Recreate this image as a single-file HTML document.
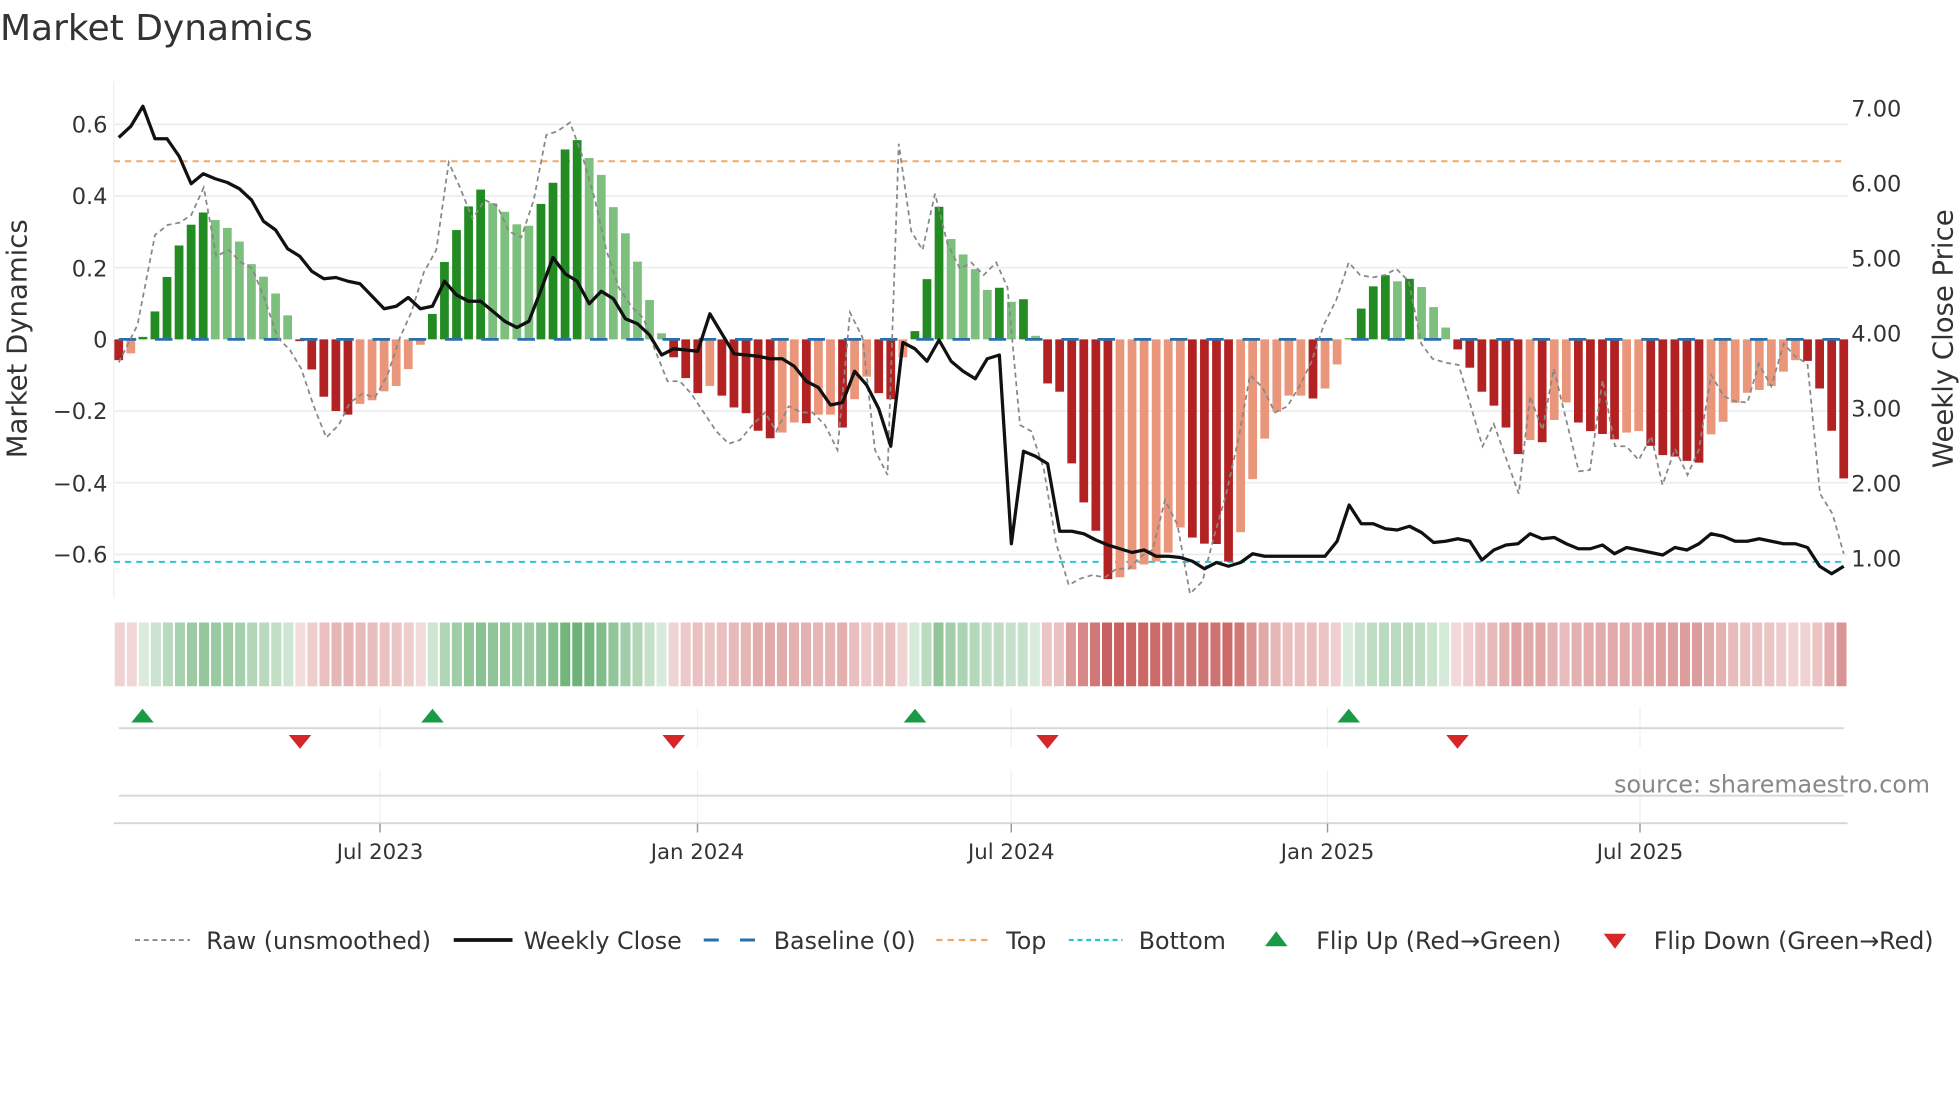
<!DOCTYPE html>
<html><head><meta charset="utf-8"><style>
html,body{margin:0;padding:0;background:#fff;}
svg{display:block;font-family:"DejaVu Sans","Liberation Sans",sans-serif;}
</style></head><body>
<svg id="s" width="1960" height="1102" viewBox="0 0 1568 881.6" xmlns="http://www.w3.org/2000/svg">
<text x="0" y="32" font-size="28.8" fill="#333">Market Dynamics</text>
<g id="grid" stroke="#e9ecf0" stroke-width="1.3"></g>
<line x1="91" y1="65" x2="91" y2="478" stroke="#eceff2" stroke-width="1"/>
<line x1="91" y1="129" x2="1475" y2="129" stroke="#f0a868" stroke-width="1.6" stroke-dasharray="5 4"/>
<line x1="91" y1="449.5" x2="1475" y2="449.5" stroke="#2ec4d6" stroke-width="1.6" stroke-dasharray="5 4"/>
<g id="bars"></g>
<line x1="95" y1="271.5" x2="1475" y2="271.5" stroke="#2a6fa8" stroke-width="2.2" stroke-dasharray="14 15"/>
<polyline id="raw" fill="none" stroke="#888" stroke-width="1.4" stroke-dasharray="4 3"/>
<polyline id="close" fill="none" stroke="#111" stroke-width="2.6" stroke-linejoin="round"/>
<g font-size="18" fill="#333" text-anchor="end">
<text x="86" y="106">0.6</text><text x="86" y="163">0.4</text><text x="86" y="221">0.2</text><text x="86" y="278">0</text>
<text x="86" y="335">−0.2</text><text x="86" y="393">−0.4</text><text x="86" y="450">−0.6</text>
</g>
<g font-size="18" fill="#333">
<text x="1481" y="93">7.00</text><text x="1481" y="153">6.00</text><text x="1481" y="213">5.00</text><text x="1481" y="273">4.00</text>
<text x="1481" y="333">3.00</text><text x="1481" y="393">2.00</text><text x="1481" y="453">1.00</text>
</g>
<text transform="translate(21,271) rotate(-90)" font-size="22" fill="#333" text-anchor="middle">Market Dynamics</text>
<text transform="translate(1562,271) rotate(-90)" font-size="22" fill="#333" text-anchor="middle">Weekly Close Price</text>
<g id="strip"></g>
<g stroke="#eef0f3" stroke-width="1">
<line x1="304" y1="566" x2="304" y2="598"/><line x1="558" y1="566" x2="558" y2="598"/><line x1="809" y1="566" x2="809" y2="598"/><line x1="1062" y1="566" x2="1062" y2="598"/><line x1="1312" y1="566" x2="1312" y2="598"/>
<line x1="304" y1="616" x2="304" y2="658"/><line x1="558" y1="616" x2="558" y2="658"/><line x1="809" y1="616" x2="809" y2="658"/><line x1="1062" y1="616" x2="1062" y2="658"/><line x1="1312" y1="616" x2="1312" y2="658"/>
</g>
<line x1="95" y1="582.5" x2="1475" y2="582.5" stroke="#d4d6d9" stroke-width="1.5"/>
<line x1="95" y1="636.5" x2="1475" y2="636.5" stroke="#d4d6d9" stroke-width="1.5"/>
<line x1="91" y1="658.5" x2="1478" y2="658.5" stroke="#d4d6d9" stroke-width="1.5"/>
<g stroke="#999" stroke-width="1.2">
<line x1="304" y1="659" x2="304" y2="666"/><line x1="558" y1="659" x2="558" y2="666"/><line x1="809" y1="659" x2="809" y2="666"/><line x1="1062" y1="659" x2="1062" y2="666"/><line x1="1312" y1="659" x2="1312" y2="666"/>
</g>
<g fill="#1a9a47">
<polygon points="105,578 123,578 114,567"/><polygon points="337,578 355,578 346,567"/><polygon points="723,578 741,578 732,567"/><polygon points="1070,578 1088,578 1079,567"/>
</g>
<g fill="#d62728">
<polygon points="231,588 249,588 240,599"/><polygon points="530,588 548,588 539,599"/><polygon points="829,588 847,588 838,599"/><polygon points="1157,588 1175,588 1166,599"/>
</g>
<text x="1544" y="634" font-size="19" fill="#888" text-anchor="end">source: sharemaestro.com</text>
<g font-size="17" fill="#333" text-anchor="middle">
<text x="304" y="687">Jul 2023</text><text x="558" y="687">Jan 2024</text><text x="809" y="687">Jul 2024</text><text x="1062" y="687">Jan 2025</text><text x="1312" y="687">Jul 2025</text>
</g>
<g font-size="19" fill="#333">
<line x1="108" y1="752" x2="152" y2="752" stroke="#888" stroke-width="1.5" stroke-dasharray="4 3"/>
<text x="165" y="759">Raw (unsmoothed)</text>
<line x1="363" y1="752" x2="410" y2="752" stroke="#111" stroke-width="3"/>
<text x="419" y="759">Weekly Close</text>
<line x1="563" y1="752" x2="605" y2="752" stroke="#2a6fa8" stroke-width="2.4" stroke-dasharray="12 17"/>
<text x="619" y="759">Baseline (0)</text>
<line x1="749" y1="752" x2="793" y2="752" stroke="#f0a868" stroke-width="1.8" stroke-dasharray="5 4"/>
<text x="805" y="759">Top</text>
<line x1="855" y1="752" x2="898" y2="752" stroke="#2ec4d6" stroke-width="1.8" stroke-dasharray="4 3"/>
<text x="911" y="759">Bottom</text>
<polygon points="1012,757 1030,757 1021,745" fill="#1a9a47"/>
<text x="1053" y="759">Flip Up (Red→Green)</text>
<polygon points="1283,747 1301,747 1292,759" fill="#d62728"/>
<text x="1323" y="759">Flip Down (Green→Red)</text>
</g>
</svg>
<script>
var NS="http://www.w3.org/2000/svg";
function el(t,a,p){var e=document.createElementNS(NS,t);for(var k in a)e.setAttribute(k,a[k]);p.appendChild(e);return e;}
var V=[-0.058,-0.039,0.007,0.078,0.174,0.262,0.32,0.354,0.333,0.311,0.273,0.21,0.175,0.128,0.067,-0.005,-0.084,-0.16,-0.2,-0.21,-0.18,-0.17,-0.145,-0.13,-0.083,-0.015,0.071,0.216,0.305,0.371,0.418,0.38,0.356,0.321,0.317,0.378,0.437,0.53,0.556,0.506,0.459,0.369,0.296,0.217,0.11,0.017,-0.05,-0.108,
-0.15,-0.13,-0.157,-0.19,-0.206,-0.255,-0.276,-0.26,-0.232,-0.234,-0.21,-0.21,-0.246,-0.167,-0.104,-0.15,-0.167,-0.05,0.023,0.168,0.37,0.28,0.237,0.196,0.138,0.144,0.105,0.112,0.01,-0.123,-0.146,-0.346,
-0.455,-0.534,-0.669,-0.664,-0.642,-0.628,-0.62,-0.595,-0.525,-0.553,-0.57,-0.571,-0.62,-0.538,-0.39,-0.277,-0.202,-0.157,-0.157,-0.165,-0.137,-0.07,0.003,0.086,0.148,0.179,0.162,0.169,0.146,0.09,0.033,-0.028,-0.079,
-0.146,-0.185,-0.246,-0.32,-0.281,-0.287,-0.225,-0.176,-0.232,-0.256,-0.264,-0.279,-0.26,-0.256,-0.297,-0.323,-0.327,-0.339,-0.344,-0.265,-0.23,-0.177,-0.149,-0.141,-0.13,-0.09,-0.058,-0.06,-0.137,-0.255,-0.388];
var C=[110,101,85,111,111,125,147,139,143,146,151,160,177,184,199,205,217,223,222,225,227,237,247,245,238,247,245,225,236,241,241,249,257,262,257,232,206,219,225,243,233,239,255,259,268,284,279,280,
281,251,267,283,284,285,287,287,293,305,310,324,322,297,308,327,357,274,279,289,272,289,297,303,287,284,435,361,365,371,425,425,
427,432,436,439,442,440,445,445,446,449,455,450,453,450,443,445,445,445,445,445,445,433,404,419,419,423,424,421,426,434,433,431,433,
448,440,436,435,427,431,430,435,439,439,436,443,438,440,442,444,438,440,435,427,429,433,433,431,433,435,435,438,453,459,453];
var R=[[95,290],[110,260],[124,188],[134,180],[144,178],[153,172],[163,150],[173,205],[183,200],[193,210],[202,215],[212,240],[222,270],[232,280],[241,295],[251,325],[261,350],[271,340],[280,322],[290,315],[300,318],[310,300],[320,270],[329,250],[339,218],[349,200],[359,130],[368,150],[378,175],[388,160],[398,165],[407,185],[417,190],[427,160],[437,108],[446,105],[456,98],[466,125],[476,160],[485,200],[495,230],[505,245],[515,255],[524,280],[534,305],[544,305],[553,315],[563,330],[573,345],[583,355],[592,352],[602,340],[612,330],[621,345],[631,325],[641,330],[650,330],[660,340],[670,360],[680,250],[690,270],[700,360],[710,380],[719,115],[729,185],[738,200],[748,155],[758,195],[768,215],[777,210],[787,220],[797,210],[806,230],[816,340],[825,345],[835,375],[845,435],[855,468],[864,463],[874,460],[884,462],[893,455],[903,455],[913,445],[922,440],[932,400],[942,420],[952,475],[962,465],[971,430],[981,395],[991,350],[1000,300],[1010,310],[1020,330],[1030,325],[1039,310],[1049,290],[1059,260],[1069,240],[1079,210],[1088,220],[1098,222],[1108,220],[1117,215],[1127,225],[1137,275],[1146,287],[1156,290],[1167,292],[1186,357],[1195,339],[1215,395],[1224,317],[1234,344],[1243,295],[1263,377],[1272,376],[1282,304],[1292,357],[1301,357],[1311,368],[1321,349],[1330,388],[1340,359],[1350,380],[1359,360],[1369,300],[1379,317],[1388,321],[1398,322],[1407,291],[1417,309],[1427,275],[1436,285],[1446,291],[1456,395],[1466,411],[1475,443]];
var g=document.getElementById('grid');
[0.6,0.4,0.2,-0.2,-0.4,-0.6].forEach(function(v){var y=271.5-v*286.7;el('line',{x1:91,x2:1478,y1:y,y2:y},g);});
var bars=document.getElementById('bars'),strip=document.getElementById('strip');
var sp=(1475-95)/143;
for(var i=0;i<V.length;i++){
 var v=V[i],x=95+i*sp,y0=271.5,y=271.5-v*286.7;
 var prev=i>0?V[i-1]:0;
 var strong=(i==0)||(v*prev<=0)||(Math.abs(v)>Math.abs(prev));
 var col=v>=0?(strong?'#228b22':'#7dbf7d'):(strong?'#b22222':'#e9967a');
 el('rect',{x:x-3.5,width:7,y:Math.min(y,y0),height:Math.max(Math.abs(y-y0),0.8),fill:col},bars);
 var t=Math.min(Math.abs(v)/0.66,1),a=0.18+0.65*t;
 var b=v>=0?[55,150,70]:[190,65,65];
 var c='rgb('+b.map(function(q){return Math.round(255-a*(255-q));}).join(',')+')';
 var sx0=91+i*(1387/144);
 el('rect',{x:sx0+0.8,width:1387/144-1.6,y:498,height:51,fill:c},strip);
}
document.getElementById('close').setAttribute('points',C.map(function(y,i){return (95+i*sp).toFixed(1)+','+y;}).join(' '));
document.getElementById('raw').setAttribute('points',R.map(function(p){return p[0]+','+p[1];}).join(' '));
</script>
</body></html>
